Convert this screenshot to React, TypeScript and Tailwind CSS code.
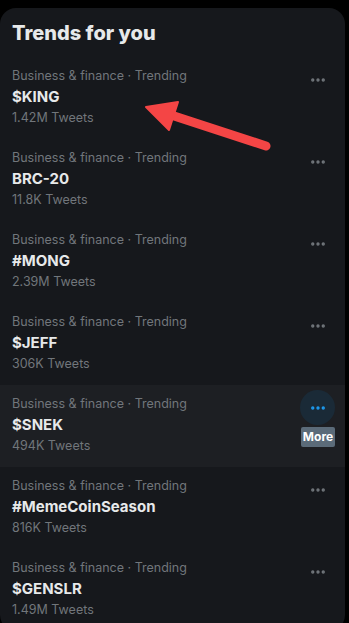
import { MoreHorizontal } from "lucide-react";

const trends = [
  { name: "$KING", count: "1.42M Tweets" },
  { name: "BRC-20", count: "11.8K Tweets" },
  { name: "#MONG", count: "2.39M Tweets" },
  { name: "$JEFF", count: "306K Tweets" },
  { name: "$SNEK", count: "494K Tweets", hover: true },
  { name: "#MemeCoinSeason", count: "816K Tweets" },
  { name: "$GENSLR", count: "1.49M Tweets" },
];

function TrendRow({ name, count, hover }: { name: string; count: string; hover?: boolean }) {
  return (
    <div className={`relative flex h-[82px] pl-3 pr-[10px] pt-[9px] ${hover ? "bg-[#1d1f23]" : ""}`}>
      <div className="flex flex-1 flex-col">
        <div className="h-[20px] text-[12.5px] leading-[20px] text-[#71767b]">Business &amp; finance · Trending</div>
        <div className="h-[22px] text-[15px] font-bold leading-[22px] text-[#e7e9ea]">{name}</div>
        <div className="h-[20px] text-[12.5px] leading-[20px] text-[#71767b]">{count}</div>
      </div>
      <div className="relative -mt-[4px]">
        <div
          className={`flex h-[35px] w-[35px] items-center justify-center rounded-full ${
            hover ? "bg-[#1a2a37] text-[#1d9bf0]" : "text-[#71767b]"
          }`}
        >
          <MoreHorizontal size={18} strokeWidth={2.5} />
        </div>
        {hover && (
          <div className="absolute left-[1px] top-[37px] flex h-[20px] w-[34px] items-center justify-center rounded-[2px] bg-[#5b6b79] text-[12px] font-bold text-white">
            More
          </div>
        )}
      </div>
    </div>
  );
}

export default function App() {
  return (
    <div className="h-[623px] w-[349px] overflow-hidden bg-black pt-2" style={{ fontFamily: "Inter, 'Noto Sans', sans-serif" }}>
      <div className="relative w-[345px] rounded-2xl bg-[#16181c]">
        <div className="flex h-[49px] items-center px-3 pt-[1px]">
          <h2 className="text-[20px] font-extrabold leading-6 text-[#e7e9ea]">Trends for you</h2>
        </div>
        {trends.map((t) => (
          <TrendRow key={t.name} {...t} />
        ))}
        {/* callout arrow, drawn in page coordinates */}
        <svg className="pointer-events-none absolute left-0 top-0" width="345" height="200" viewBox="0 8 345 200">
          <line x1="266" y1="146" x2="168" y2="114" stroke="#f44545" strokeWidth="9" strokeLinecap="round" />
          <polygon points="146,107 178,102 169,130" fill="#f44545" stroke="#f44545" strokeWidth="2" strokeLinejoin="round" />
        </svg>
      </div>
    </div>
  );
}
